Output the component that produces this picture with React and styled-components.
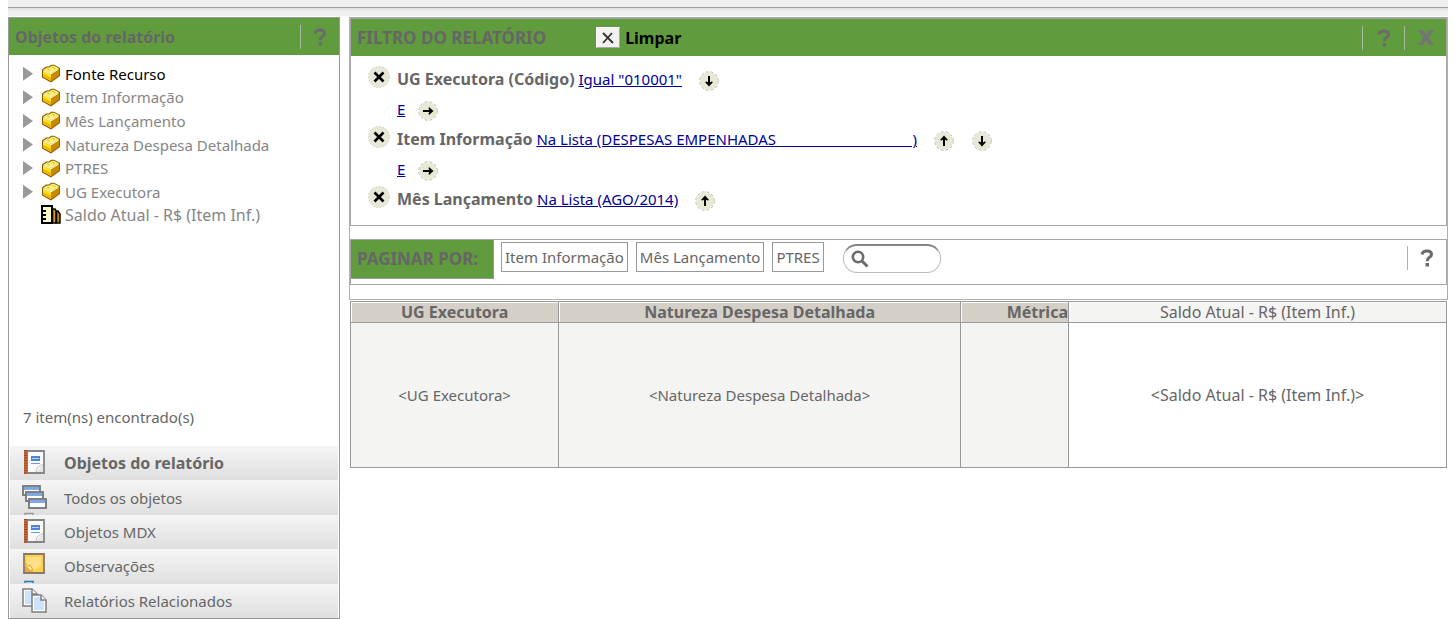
import React from "react";
import styled, { createGlobalStyle } from "styled-components";

const attributes = [
  "Fonte Recurso",
  "Item Informação",
  "Mês Lançamento",
  "Natureza Despesa Detalhada",
  "PTRES",
  "UG Executora",
];

const sections = [
  { label: "Objetos do relatório", icon: "notebook", active: true },
  { label: "Todos os objetos", icon: "windows", peek: "#9a9a9a" },
  { label: "Objetos MDX", icon: "notebook" },
  { label: "Observações", icon: "note", peek: "#1c7cc4" },
  { label: "Relatórios Relacionados", icon: "pages" },
];

const filters = [
  { name: "UG Executora (Código)", value: 'Igual "010001"', moves: ["down"] },
  {
    name: "Item Informação",
    value: "Na Lista (DESPESAS EMPENHADAS" + "\u00a0".repeat(35) + ")",
    moves: ["up", "down"],
  },
  { name: "Mês Lançamento", value: "Na Lista (AGO/2014)", moves: ["up"] },
];

const pageFields = ["Item Informação", "Mês Lançamento", "PTRES"];

const moveLabels = { up: "Mover para cima", down: "Mover para baixo", right: "Agrupar" };
const moveAngles = { up: 0, right: 90, down: 180 };

function CubeIcon() {
  return (
    <svg width="20" height="19" viewBox="0 0 20 19">
      <path d="M1 5.500 L5 2.500 L8 2.500 L10 .8 L13 .8 L19 4 V12 L10 18.500 L1 13.500 Z" fill="#8a5a00" />
      <path d="M2 6 L6 3.500 L8.500 3.500 L10.500 1.800 L13 1.800 L18 4.500 L10 9.500 Z" fill="#fff27a" />
      <path d="M2 6.500 L10 10 V17 L2 12.800 Z" fill="#ffe11c" />
      <path d="M2 10 L10 13.500 V17 L2 12.800 Z" fill="#f2b705" />
      <path d="M10 10 L18.300 5 V11.500 L10 17.300 Z" fill="#c98a00" />
      <path d="M2.500 6.600 L10 9.800 L17.500 5.300" fill="none" stroke="#fffce0" />
      <path d="M6 5 L9 6.300 M10.500 3 L14.500 4.800" stroke="#e8bd1c" />
    </svg>
  );
}

function MetricIcon() {
  return (
    <svg width="20" height="20" viewBox="0 0 20 20">
      <path d="M1 1 H11 V18 H1 Z" fill="#fffbc4" stroke="#000" strokeWidth="2" />
      <path d="M1 6 H5 M1 10 H5 M1 14 H5" stroke="#000" strokeWidth="2" />
      <path d="M11.500 4 H14 L15 6 V18 H11.500 Z" fill="#dc9c00" stroke="#000" strokeWidth="1.500" />
      <path d="M15.500 6 H17 L19 9 V18 H15.500 Z" fill="#c08700" stroke="#000" strokeWidth="1.500" />
    </svg>
  );
}

function SectionIcon({ kind, peek }) {
  return (
    <svg width="26" height="34" viewBox="0 0 26 34">
      <g transform="translate(0 2)">
        {kind === "notebook" && (
          <>
            <path d="M3 3 H22 V25 H3 Z" fill="#fafafa" stroke="#858585" strokeWidth="1.800" />
            <path d="M2 2 H6 V26 H2 Z" fill="#cf6a35" />
            <path d="M3.500 2 V26" stroke="#5c3a28" strokeWidth="3" strokeDasharray="1 1.500" opacity=".6" />
            <path d="M9 8 H18 V13 H9 Z" fill="#4e83d6" />
            <path d="M10 10.500 H17" stroke="#b9d2f5" />
            <path d="M9 15.500 H18" stroke="#6f9ce0" />
            <path d="M14 24 L21 16 V24 Z" fill="#e6e6e6" />
            <path d="M14 24 L15 20 L21 16" fill="#fff" stroke="#c4c4c4" />
          </>
        )}
        {kind === "windows" &&
          [[1, 3], [4, 9], [7, 16]].map(([x, y]) => (
            <g key={x}>
              <rect x={x} y={y} width="17" height="9" fill="#fff" stroke="#747474" strokeWidth="1.800" />
              <rect x={x + 1} y={y + 1} width="15" height="3" fill="#7eaae4" />
            </g>
          ))}
        {kind === "note" && (
          <>
            <path d="M2 3 H22 V22 H2 Z" fill="#ffcf4d" stroke="#85796a" strokeWidth="1.800" />
            <path d="M5 6 H19 V15 L13 19 L5 13 Z" fill="#ffe085" />
            <path d="M3 12 Q6 17 8 14 Q11 17 10 21 L3 15 Z" fill="#fff0b5" stroke="#e09c24" />
            <path d="M3 14 L10 21 H3 Z" fill="#efa936" />
          </>
        )}
        {kind === "pages" &&
          [[1, 3], [10, 9]].map(([x, y]) => (
            <g key={x} fill="#fff" stroke="#7d7d7d" strokeWidth="1.500">
              <path d={`M${x} ${y} h9 l5 5 v12 h-14 Z`} />
              <path d={`M${x + 2} ${y + 2} h6 l4 5 v8 h-10 Z`} fill="#cde2fd" stroke="none" />
              <path d={`M${x + 9} ${y} v5 h5`} />
            </g>
          ))}
      </g>
      {peek && <path d="M3 34 V32.500 H11 V34" fill="none" stroke={peek} strokeWidth="1.500" />}
    </svg>
  );
}

function HelpIcon() {
  return (
    <svg width="14" height="20" viewBox="0 0 14 20" fill="none">
      <path
        d="M2 6.500 Q2.500 3 7 3 Q11.500 3 11.500 6.300 Q11.500 8 9.500 9.300 Q7.200 10.800 7.200 13.200"
        stroke="#6b6b6b"
        strokeWidth="3"
      />
      <rect x="5.500" y="15" width="3.500" height="3.500" fill="#6b6b6b" />
    </svg>
  );
}

function CloseIcon() {
  return (
    <svg width="18" height="18" viewBox="0 0 18 18">
      <path d="M1 1 H6 L9 5.500 L12 1 H17 L11.500 8.500 L17 16 H12 L9 11.500 L6 16 H1 L6.500 8.500 Z" fill="#747474" />
    </svg>
  );
}

function RemoveIcon() {
  return (
    <svg width="22" height="22" viewBox="0 0 22 22">
      <circle cx="11" cy="11" r="10.500" fill="#e8e8d6" stroke="#d4d4c8" strokeDasharray="2 1.500" />
      <path d="M6.500 6.500 L15.500 15.500 M15.500 6.500 L6.500 15.500" stroke="#000" strokeWidth="2.600" />
    </svg>
  );
}

function ArrowIcon({ dir }) {
  return (
    <svg width="20" height="20" viewBox="0 0 20 20">
      <circle cx="10" cy="10" r="9.300" fill="#e8e8d6" stroke="#fff" />
      <circle cx="10" cy="10" r="9.300" fill="none" stroke="#c0c0b4" strokeDasharray="3 2" />
      <g transform={`rotate(${moveAngles[dir]} 10 10)`}>
        <path d="M10 15 V6" stroke="#000" strokeWidth="2" />
        <path d="M10 4.500 L14 9 L12.500 9.500 L10 8 L7.500 9.500 L6 9 Z" fill="#000" />
      </g>
    </svg>
  );
}

function MoveButton({ dir }) {
  return (
    <ArrowButton type="button" aria-label={moveLabels[dir]}>
      <ArrowIcon dir={dir} />
    </ArrowButton>
  );
}

export default function App() {
  return (
    <>
      <GlobalStyle />
      <Page>
        <TopStrip />
        <Columns>
          <Sidebar>
            <PanelHeader>
              <PanelTitle>Objetos do relatório</PanelTitle>
              <Tools>
                <ToolButton type="button" aria-label="Ajuda">
                  <HelpIcon />
                </ToolButton>
              </Tools>
            </PanelHeader>
            <Tree>
              {attributes.map((name, i) => (
                <TreeItem key={name} $current={i === 0}>
                  <Expander type="button" aria-label={`Expandir ${name}`} />
                  <CubeIcon />
                  {name}
                </TreeItem>
              ))}
              <TreeItem $metric>
                <Spacer />
                <MetricIcon />
                Saldo Atual - R$ (Item Inf.)
              </TreeItem>
            </Tree>
            <Found>7 item(ns) encontrado(s)</Found>
            <Sections>
              {sections.map((s) => (
                <SectionButton type="button" key={s.label} $active={s.active}>
                  <SectionIcon kind={s.icon} peek={s.peek} />
                  {s.label}
                </SectionButton>
              ))}
            </Sections>
          </Sidebar>

          <Main>
            <Editor>
              <FilterPanel>
                <PanelHeader>
                  <PanelTitle $large>FILTRO DO RELATÓRIO</PanelTitle>
                  <ClearButton type="button">
                    <ClearBox>
                      <svg width="12" height="12" viewBox="0 0 12 12">
                        <path d="M1 1 L11 11 M10 1 L1 11" stroke="#333" strokeWidth="1.800" />
                      </svg>
                    </ClearBox>
                    Limpar
                  </ClearButton>
                  <Tools>
                    <ToolButton type="button" aria-label="Ajuda" $wide>
                      <HelpIcon />
                    </ToolButton>
                    <ToolButton type="button" aria-label="Fechar" $wide>
                      <CloseIcon />
                    </ToolButton>
                  </Tools>
                </PanelHeader>
                <FilterList>
                  {filters.map((f, i) => (
                    <React.Fragment key={f.name}>
                      {i > 0 && (
                        <Operator>
                          <FilterLink href="#operador">E</FilterLink>
                          <MoveButton dir="right" />
                        </Operator>
                      )}
                      <Condition>
                        <RemoveButton type="button" aria-label={`Remover ${f.name}`}>
                          <RemoveIcon />
                        </RemoveButton>
                        <span>
                          <FilterName>{f.name}</FilterName>{" "}
                          <FilterLink href="#filtro">{f.value}</FilterLink>
                        </span>
                        <Moves>
                          {f.moves.map((dir) => (
                            <MoveButton key={dir} dir={dir} />
                          ))}
                        </Moves>
                      </Condition>
                    </React.Fragment>
                  ))}
                </FilterList>
              </FilterPanel>

              <PageBy>
                <PageByTitle>PAGINAR POR:</PageByTitle>
                <Fields>
                  {pageFields.map((name) => (
                    <Field type="button" key={name}>
                      {name}
                    </Field>
                  ))}
                </Fields>
                <Search>
                  <svg width="18" height="18" viewBox="0 0 18 18" fill="none" stroke="#6b6b6b">
                    <circle cx="7" cy="7" r="5.200" strokeWidth="2.600" />
                    <path d="M11 11 L16.500 16.500" strokeWidth="3" />
                  </svg>
                  <SearchInput type="text" aria-label="Pesquisar" />
                </Search>
                <Tools>
                  <ToolButton type="button" aria-label="Ajuda">
                    <HelpIcon />
                  </ToolButton>
                </Tools>
              </PageBy>
            </Editor>

            <Grid>
              <colgroup>
                <col width="19%" />
                <col />
                <col width="108" />
                <col width="378" />
              </colgroup>
              <thead>
                <tr>
                  <HeadCell>UG Executora</HeadCell>
                  <HeadCell>Natureza Despesa Detalhada</HeadCell>
                  <HeadCell $align="right">Métrica</HeadCell>
                  <MetricHead>Saldo Atual - R$ (Item Inf.)</MetricHead>
                </tr>
              </thead>
              <tbody>
                <tr>
                  <BodyCell>&lt;UG Executora&gt;</BodyCell>
                  <BodyCell>&lt;Natureza Despesa Detalhada&gt;</BodyCell>
                  <BodyCell />
                  <MetricCell>&lt;Saldo Atual - R$ (Item Inf.)&gt;</MetricCell>
                </tr>
              </tbody>
            </Grid>
          </Main>
        </Columns>
      </Page>
    </>
  );
}

const GlobalStyle = createGlobalStyle`
  * {
    box-sizing: border-box;
  }

  body {
    margin: 0;
    background: #fff;
    color: #666;
    font-family: "Noto Sans", "Open Sans", sans-serif;
    font-size: 15px;
    line-height: 20px;
  }

  button, input {
    font: inherit;
    color: inherit;
  }

  button {
    padding: 0;
    border: 0;
    background: none;
    cursor: pointer;
  }

  svg {
    display: block;
    flex: none;
  }
`;

const Page = styled.div`
  padding: 0 7px 0 8px;
`;

const TopStrip = styled.div`
  height: 16px;
  margin-bottom: 1px;
  background: linear-gradient(#efefef 7px, #989898 7px, #a8a8a8 8px, #dedede 8px, #efefef 11px);
`;

const Columns = styled.div`
  display: flex;
  align-items: flex-start;
  gap: 9px;
`;

const Sidebar = styled.aside`
  flex: 0 0 332px;
  border: 1px solid #999;
`;

const PanelHeader = styled.header`
  display: flex;
  align-items: center;
  height: 37px;
  padding-left: 6px;
  background: #609c3d;
`;

const PanelTitle = styled.h2`
  margin: 0;
  font-size: ${(props) => (props.$large ? "17px" : "16px")};
  font-weight: bold;
`;

const Tools = styled.div`
  display: flex;
  margin-left: auto;
`;

const ToolButton = styled.button`
  display: flex;
  align-items: center;
  justify-content: center;
  width: ${(props) => (props.$wide ? "42px" : "39px")};
  height: 24px;
  border-left: 1px solid #a9b8a0;
`;

const Tree = styled.ul`
  display: flex;
  flex-direction: column;
  height: 165px;
  margin: 7px 0 0;
  padding: 0 0 0 14px;
  list-style: none;
`;

const TreeItem = styled.li`
  display: flex;
  flex: 1;
  align-items: center;
  gap: 4px;
  color: ${(props) => (props.$current ? "#000" : "#868686")};
  font-size: ${(props) => (props.$metric ? "16px" : "15px")};
`;

const Expander = styled.button`
  width: 10px;
  height: 14px;
  margin-right: 4px;
  background: #999;
  clip-path: polygon(0 0, 100% 50%, 0 100%);
`;

const Spacer = styled.span`
  width: 10px;
  margin-right: 4px;
`;

const Found = styled.p`
  margin: 180px 0 19px 14px;
`;

const Sections = styled.nav`
  display: flex;
  flex-direction: column;
  height: 172px;
  padding: 0 1px;
`;

const SectionButton = styled.button`
  display: flex;
  flex: 1;
  align-items: center;
  gap: 16px;
  padding-left: 12px;
  background: linear-gradient(#f5f5f5, #dfdfdf);
  font-size: ${(props) => (props.$active ? "16px" : "15px")};
  font-weight: ${(props) => (props.$active ? "bold" : "normal")};
`;

const Main = styled.main`
  flex: 1;
  min-width: 0;
`;

const Editor = styled.div`
  padding-bottom: 14px;
  border: 1px solid #b0b0b0;
  border-top: 0;
`;

const FilterPanel = styled.section`
  border: 1px solid #a6a6a6;
  border-top-width: 2px;
`;

const FilterList = styled.div`
  padding: 8px 0 11px 17px;
`;

const Condition = styled.div`
  display: flex;
  align-items: center;
  gap: 7px;
  height: 30px;
`;

const Operator = styled(Condition)`
  gap: 13px;
  padding-left: 29px;
`;

const Moves = styled.span`
  display: flex;
  gap: 18px;
  padding-left: 10px;
`;

const RemoveButton = styled.button`
  padding-bottom: 4px;
`;

const ArrowButton = styled.button`
  padding-top: 3px;
`;

const FilterName = styled.b`
  font-size: 16px;
`;

const FilterLink = styled.a`
  color: #000099;
`;

const ClearButton = styled.button`
  display: flex;
  align-items: center;
  gap: 5px;
  margin-left: 50px;
  color: #000;
  font-size: 16px;
  font-weight: bold;
`;

const ClearBox = styled.span`
  display: flex;
  align-items: center;
  justify-content: center;
  width: 24px;
  height: 21px;
  border: 1px solid #fff;
  border-right-color: #aaa;
  border-bottom-color: #aaa;
  background: #f2f2f0;
`;

const PageBy = styled.section`
  display: flex;
  align-items: flex-start;
  height: 46px;
  margin-top: 13px;
  border: 1px solid #a6a6a6;

  ${Tools} {
    padding-top: 6px;
  }
`;

const PageByTitle = styled.h2`
  width: 143px;
  margin: 0;
  padding: 9px 6px;
  border-right: 1px solid #999;
  border-bottom: 1px solid #999;
  background: #609c3d;
  font-size: 17px;
  font-weight: bold;
`;

const Fields = styled.div`
  display: flex;
  gap: 8px;
  margin: 2px 19px 0 7px;
`;

const Field = styled.button`
  height: 30px;
  padding: 0 3px;
  border: 1px solid #999;
`;

const Search = styled.label`
  display: flex;
  align-items: center;
  gap: 4px;
  width: 98px;
  height: 29px;
  margin-top: 4px;
  padding: 0 8px 0 7px;
  border: 1px solid #bdbdbd;
  border-top: 2px solid #858585;
  border-radius: 14px;
`;

const SearchInput = styled.input`
  width: 100%;
  min-width: 0;
  padding: 0;
  border: 0;
  outline: 0;
  background: none;
`;

const Grid = styled.table`
  width: calc(100% - 2px);
  margin: 1px 0 0 1px;
  border-collapse: collapse;
  table-layout: fixed;
`;

const HeadCell = styled.th`
  height: 21px;
  padding: 0;
  border: 1px solid #999;
  background: #d4cfc7;
  box-shadow: inset 1px 1px #fff;
  font-size: 16px;
  line-height: 20px;
  text-align: ${(props) => props.$align || "center"};
`;

const MetricHead = styled(HeadCell)`
  background: #f4f4f2;
  font-weight: normal;
`;

const BodyCell = styled.td`
  height: 145px;
  padding: 0;
  border: 1px solid #999;
  background: #f4f4f2;
  text-align: center;
`;

const MetricCell = styled(BodyCell)`
  background: #fff;
  font-size: 16px;
`;
